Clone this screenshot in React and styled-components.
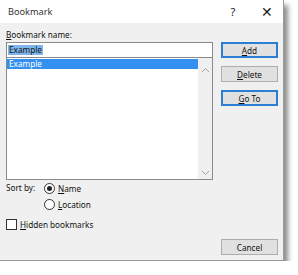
import React from "react";
import styled, { createGlobalStyle } from "styled-components";

const GlobalStyle = createGlobalStyle`
  body {
    margin: 0;
    background: #ffffff;
    font-family: "Noto Sans", "Liberation Sans", sans-serif;
  }
`;

const Window = styled.div`
  width: 284px;
  height: 261px;
  box-sizing: border-box;
  border: 1px solid #9a9a9a;
  border-top: none;
  border-left: none;
  background: #f0f0f0;
  box-shadow: 4px 5px 5px rgba(0, 0, 0, 0.45);
  display: flex;
  flex-direction: column;
  font-size: 8.2px;
  color: #111;
`;

const TitleBar = styled.div`
  height: 23px;
  flex: none;
  background: #ffffff;
  display: flex;
  align-items: center;
  padding-left: 8px;
  font-size: 9.2px;
  color: #333;
`;

const Title = styled.div`
  flex: 1;
`;

const TitleButton = styled.div`
  width: ${(p) => p.$width || 36}px;
  text-align: center;
  font-size: ${(p) => p.$size || 11}px;
  color: #222;
`;

const Body = styled.div`
  flex: 1;
  display: flex;
  flex-direction: column;
  padding: 6px 5px 5px 6px;
`;

const Label = styled.div`
  height: 12px;
  line-height: 12px;
  margin-bottom: 1px;
`;

const Key = styled.span`
  text-decoration: underline;
  text-underline-offset: 1px;
`;

const Main = styled.div`
  display: flex;
  gap: 8px;
`;

const LeftCol = styled.div`
  width: 209px;
  display: flex;
  flex-direction: column;
`;

const TextBox = styled.div`
  height: 16px;
  box-sizing: border-box;
  border: 1px solid #8a8a8a;
  background: #fff;
  display: flex;
  align-items: center;
  padding-left: 1px;
`;

const Selected = styled.span`
  background: #7eb4ea;
  color: #111;
  line-height: 10px;
  padding: 0 1px;
`;

const List = styled.div`
  height: 122px;
  box-sizing: border-box;
  border: 1px solid #8a8a8a;
  border-top: none;
  background: #fff;
  display: flex;
`;

const Items = styled.div`
  flex: 1;
  padding-top: 1px;
`;

const Item = styled.div`
  height: 10px;
  line-height: 10px;
  padding-left: 2px;
  background: ${(p) => (p.$active ? "#3390ef" : "transparent")};
  color: ${(p) => (p.$active ? "#fff" : "#111")};
`;

const Scrollbar = styled.div`
  width: 14px;
  background: #f0f0f0;
  display: flex;
  flex-direction: column;
  justify-content: space-between;
  align-items: center;
  padding: 9px 0 3px;
`;

const RightCol = styled.div`
  width: 57px;
  display: flex;
  flex-direction: column;
  gap: 8px;
`;

const Button = styled.div`
  width: 57px;
  height: 16px;
  box-sizing: border-box;
  border: 1px solid ${(p) => (p.$default ? "#2a7fd4" : "#adadad")};
  box-shadow: ${(p) => (p.$default ? "inset 0 0 0 1px #2a7fd4" : "none")};
  background: #e1e1e1;
  display: flex;
  align-items: center;
  justify-content: center;
  font-size: 8.2px;
  color: #111;
`;

const SortRow = styled.div`
  display: flex;
  margin-top: 1px;
`;

const SortLabel = styled.div`
  width: 38px;
  line-height: 14px;
`;

const Options = styled.div`
  display: flex;
  flex-direction: column;
  gap: 2px;
`;

const Option = styled.div`
  display: flex;
  align-items: center;
  gap: 3px;
  height: 14px;
`;

const Radio = styled.span`
  width: 11px;
  height: 11px;
  box-sizing: border-box;
  border: 1px solid #333;
  border-radius: 50%;
  background: #fff;
  display: flex;
  align-items: center;
  justify-content: center;
  &::after {
    content: "";
    width: 5px;
    height: 5px;
    border-radius: 50%;
    background: ${(p) => (p.$checked ? "#222" : "transparent")};
  }
`;

const CheckRow = styled.div`
  display: flex;
  align-items: center;
  gap: 3px;
  height: 14px;
  margin-top: 6px;
`;

const Checkbox = styled.span`
  width: 11px;
  height: 11px;
  box-sizing: border-box;
  border: 1px solid #333;
  background: #fff;
`;

const Footer = styled.div`
  margin-top: auto;
  display: flex;
  justify-content: flex-end;
`;

const Chevron = ({ up }) => (
  <svg width="9" height="6" viewBox="0 0 9 6">
    <path
      d={up ? "M1 5 L4.5 1.5 L8 5" : "M1 1 L4.5 4.5 L8 1"}
      fill="none"
      stroke="#a0a0a0"
      strokeWidth="1"
    />
  </svg>
);

export default function App() {
  return (
    <>
      <GlobalStyle />
      <Window>
        <TitleBar>
          <Title>Bookmark</Title>
          <TitleButton>?</TitleButton>
          <TitleButton $width={32} $size={14}>✕</TitleButton>
        </TitleBar>
        <Body>
          <Label>
            <Key>B</Key>ookmark name:
          </Label>
          <Main>
            <LeftCol>
              <TextBox>
                <Selected>Example</Selected>
              </TextBox>
              <List>
                <Items>
                  <Item $active>Example</Item>
                </Items>
                <Scrollbar>
                  <Chevron up />
                  <Chevron />
                </Scrollbar>
              </List>
            </LeftCol>
            <RightCol>
              <Button $default>
                <Key>A</Key>dd
              </Button>
              <Button>
                <Key>D</Key>elete
              </Button>
              <Button $default>
                <Key>G</Key>o To
              </Button>
            </RightCol>
          </Main>
          <SortRow>
            <SortLabel>Sort by:</SortLabel>
            <Options>
              <Option>
                <Radio $checked />
                <span>
                  <Key>N</Key>ame
                </span>
              </Option>
              <Option>
                <Radio />
                <span>
                  <Key>L</Key>ocation
                </span>
              </Option>
            </Options>
          </SortRow>
          <CheckRow>
            <Checkbox />
            <span>
              <Key>H</Key>idden bookmarks
            </span>
          </CheckRow>
          <Footer>
            <Button>Cancel</Button>
          </Footer>
        </Body>
      </Window>
    </>
  );
}
